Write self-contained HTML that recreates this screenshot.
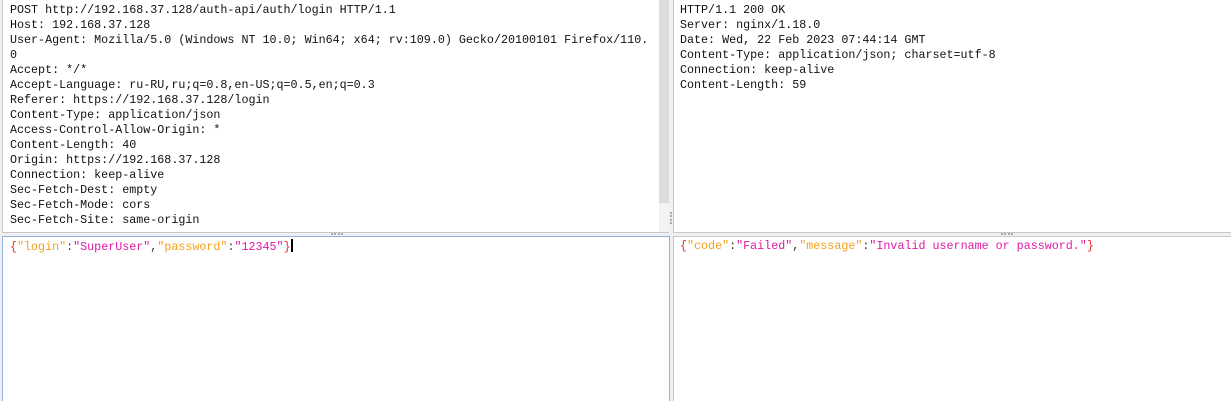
<!DOCTYPE html>
<html><head><style>
body{margin:0;width:1231px;height:401px;background:#f0f0f0;position:relative;overflow:hidden;font-family:"Liberation Mono",monospace;font-size:11.7px;}
.p{position:absolute;background:#fff;box-sizing:border-box;}
.t{position:absolute;left:7px;top:3px;line-height:15px;white-space:pre;color:#111;}
.k{color:#f5a01a}.s{color:#e01aa8}.b{color:#e8302a}.c{color:#333}
</style></head><body>
<div class="p" style="left:2px;top:0;width:667px;height:233px;border-left:1px solid #c8c8c8;border-bottom:1px solid #c8c8c8">
<div class="t">POST http://192.168.37.128/auth-api/auth/login HTTP/1.1
Host: 192.168.37.128
User-Agent: Mozilla/5.0 (Windows NT 10.0; Win64; x64; rv:109.0) Gecko/20100101 Firefox/110.
0
Accept: */*
Accept-Language: ru-RU,ru;q=0.8,en-US;q=0.5,en;q=0.3
Referer: https://192.168.37.128/login
Content-Type: application/json
Access-Control-Allow-Origin: *
Content-Length: 40
Origin: https://192.168.37.128
Connection: keep-alive
Sec-Fetch-Dest: empty
Sec-Fetch-Mode: cors
Sec-Fetch-Site: same-origin</div>
<div style="position:absolute;left:656px;top:0;width:10px;height:232px;background:#f3f3f3"></div>
<div style="position:absolute;left:656px;top:0;width:10px;height:203px;background:#dcdcdc"></div>
</div>
<div class="p" style="left:673px;top:0;width:558px;height:233px;border-left:1px solid #c8c8c8;border-bottom:1px solid #c8c8c8">
<div class="t" style="left:6px">HTTP/1.1 200 OK
Server: nginx/1.18.0
Date: Wed, 22 Feb 2023 07:44:14 GMT
Content-Type: application/json; charset=utf-8
Connection: keep-alive
Content-Length: 59</div>
</div>
<div class="p" style="left:2px;top:236px;width:668px;height:165px;border:1px solid #8fb0e0;border-bottom:none">
<div class="t" style="left:7px;top:2px"><span class="b">{</span><span class="k">"login"</span><span class="c">:</span><span class="s">"SuperUser"</span><span class="c">,</span><span class="k">"password"</span><span class="c">:</span><span class="s">"12345"</span><span class="b">}</span><span style="display:inline-block;width:2px;height:13px;background:#000;vertical-align:-2px"></span></div>
</div>
<div class="p" style="left:673px;top:236px;width:558px;height:165px;border-left:1px solid #c8c8c8;border-top:1px solid #c8c8c8">
<div class="t" style="left:6px;top:2px"><span class="b">{</span><span class="k">"code"</span><span class="c">:</span><span class="s">"Failed"</span><span class="c">,</span><span class="k">"message"</span><span class="c">:</span><span class="s">"Invalid username or password."</span><span class="b">}</span></div>
</div>
<div style="position:absolute;left:331px;top:233px;width:12px;height:2px;border-top:2px dotted #aaa"></div>
<div style="position:absolute;left:1001px;top:233px;width:12px;height:2px;border-top:2px dotted #aaa"></div>
<div style="position:absolute;left:670px;top:212px;width:2px;height:12px;border-left:2px dotted #aaa"></div>
</body></html>
